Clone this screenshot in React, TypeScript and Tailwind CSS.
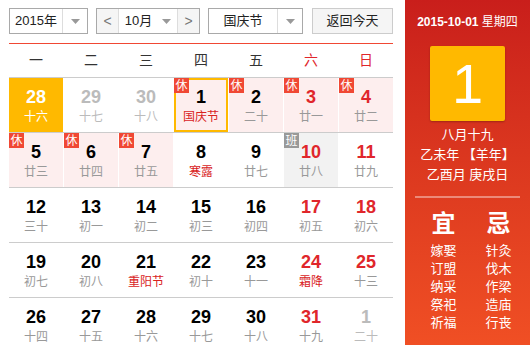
import React from "react";

type Day = {
  n: number;
  lunar: string;
  tone?: "other" | "weekend";
  festival?: boolean;
  badge?: "休" | "班";
  bg?: "pink" | "gray" | "orange";
  today?: boolean;
};

const WEEKDAYS = ["一", "二", "三", "四", "五", "六", "日"];

const ROWS: Day[][] = [
  [
    { n: 28, lunar: "十六", bg: "orange" },
    { n: 29, lunar: "十七", tone: "other" },
    { n: 30, lunar: "十八", tone: "other" },
    { n: 1, lunar: "国庆节", festival: true, badge: "休", bg: "pink", today: true },
    { n: 2, lunar: "二十", badge: "休", bg: "pink" },
    { n: 3, lunar: "廿一", badge: "休", bg: "pink", tone: "weekend" },
    { n: 4, lunar: "廿二", badge: "休", bg: "pink", tone: "weekend" },
  ],
  [
    { n: 5, lunar: "廿三", badge: "休", bg: "pink" },
    { n: 6, lunar: "廿四", badge: "休", bg: "pink" },
    { n: 7, lunar: "廿五", badge: "休", bg: "pink" },
    { n: 8, lunar: "寒露", festival: true },
    { n: 9, lunar: "廿七" },
    { n: 10, lunar: "廿八", badge: "班", bg: "gray", tone: "weekend" },
    { n: 11, lunar: "廿九", tone: "weekend" },
  ],
  [
    { n: 12, lunar: "三十" },
    { n: 13, lunar: "初一" },
    { n: 14, lunar: "初二" },
    { n: 15, lunar: "初三" },
    { n: 16, lunar: "初四" },
    { n: 17, lunar: "初五", tone: "weekend" },
    { n: 18, lunar: "初六", tone: "weekend" },
  ],
  [
    { n: 19, lunar: "初七" },
    { n: 20, lunar: "初八" },
    { n: 21, lunar: "重阳节", festival: true },
    { n: 22, lunar: "初十" },
    { n: 23, lunar: "十一" },
    { n: 24, lunar: "霜降", festival: true, tone: "weekend" },
    { n: 25, lunar: "十三", tone: "weekend" },
  ],
  [
    { n: 26, lunar: "十四" },
    { n: 27, lunar: "十五" },
    { n: 28, lunar: "十六" },
    { n: 29, lunar: "十七" },
    { n: 30, lunar: "十八" },
    { n: 31, lunar: "十九", tone: "weekend" },
    { n: 1, lunar: "二十", tone: "other" },
  ],
];

const YI = ["嫁娶", "订盟", "纳采", "祭祀", "祈福"];
const JI = ["针灸", "伐木", "作梁", "造庙", "行丧"];

function Caret() {
  return (
    <svg width="9" height="5" viewBox="0 0 9 5">
      <path d="M0 0h9L4.5 5z" fill="#999" />
    </svg>
  );
}

function Select({ label, width }: { label: string; width: string }) {
  return (
    <div className={`flex h-full border border-[#a9a9a9] ${width}`}>
      <div className="flex flex-1 items-center justify-center border-r border-[#ddd] text-[13px] text-[#222]">
        {label}
      </div>
      <div className="flex w-[24px] items-center justify-center">
        <Caret />
      </div>
    </div>
  );
}

function Cell({ d }: { d: Day }) {
  const bg =
    d.bg === "orange"
      ? "bg-[#ffb900]"
      : d.bg === "pink"
        ? "bg-[#fdeeee]"
        : d.bg === "gray"
          ? "bg-[#f2f2f2]"
          : "bg-white";

  let num = "text-black";
  let lunar = "text-[#999]";
  if (d.bg === "orange") {
    num = "text-white";
    lunar = "text-white";
  } else if (d.tone === "other") {
    num = "text-[#bbb]";
    lunar = "text-[#bbb]";
  } else if (d.tone === "weekend") {
    num = "text-[#e0262b]";
  }
  if (d.festival) lunar = "text-[#d9231e]";

  return (
    <div
      className={`relative flex flex-col items-center ${bg} ${
        d.today ? "border-2 border-[#ffb900]" : ""
      }`}
    >
      {d.badge && (
        <span
          className={`absolute ${d.today ? "-left-[2px] -top-[2px]" : "left-0 top-0"} flex h-[15px] w-[15px] items-center justify-center text-[12px] leading-none text-white ${
            d.badge === "休" ? "bg-[#f04834]" : "bg-[#999]"
          }`}
        >
          {d.badge}
        </span>
      )}
      <span
        className={`${d.today ? "mt-[7px]" : "mt-[9px]"} text-[18px] font-bold leading-[20px] ${num}`}
      >
        {d.n}
      </span>
      <span className={`mt-[2px] text-[12px] leading-[16px] ${lunar}`}>{d.lunar}</span>
    </div>
  );
}

export default function App() {
  return (
    <div
      className="flex h-[345px] w-[530px] overflow-hidden bg-white"
      style={{ fontFamily: '"Liberation Sans", "Noto Sans CJK SC", sans-serif' }}
    >
      {/* Calendar */}
      <div className="w-[405px] pl-[9px] pr-[12px] pt-[8px]">
        <div className="flex h-[26px] gap-[8px]">
          <Select label="2015年" width="w-[79px]" />
          <div className="flex h-full w-[104px] border border-[#a9a9a9]">
            <div className="flex w-[22px] items-center justify-center border-r border-[#ddd] bg-[#f5f5f5] text-[14px] text-[#777]">
              &lt;
            </div>
            <div className="flex flex-1 items-center justify-center gap-[10px] text-[13px] text-[#222]">
              <span>10月</span>
              <Caret />
            </div>
            <div className="flex w-[22px] items-center justify-center border-l border-[#ddd] bg-[#f5f5f5] text-[14px] text-[#777]">
              &gt;
            </div>
          </div>
          <Select label="国庆节" width="w-[95px]" />
          <button className="ml-px h-full w-[81px] border border-[#ccc] bg-[#f5f5f5] text-[13px] text-[#222]">
            返回今天
          </button>
        </div>

        <div className="mt-[9px] h-px bg-[#f04834]" />

        <div className="grid h-[34px] grid-cols-7 gap-x-px border-b border-[#ccc] text-[14px]">
          {WEEKDAYS.map((w, i) => (
            <div
              key={w}
              className={`flex items-center justify-center ${i >= 5 ? "text-[#e0262b]" : "text-[#333]"}`}
            >
              {w}
            </div>
          ))}
        </div>

        {ROWS.map((row, r) => (
          <div key={r} className="grid h-[55px] grid-cols-7 gap-x-px border-b border-[#ccc]">
            {row.map((d, i) => (
              <Cell key={i} d={d} />
            ))}
          </div>
        ))}
      </div>

      {/* Side panel */}
      <div className="flex flex-1 flex-col bg-linear-to-b from-[#c91e1b] to-[#f04f24] text-white">
        <div className="pt-[14px] text-center text-[12px] leading-[16px]">
          <span className="font-bold">2015-10-01</span> 星期四
        </div>
        <div className="mx-auto mt-[16px] flex h-[75px] w-[75px] items-center justify-center rounded-[2px] bg-[#ffb900] text-[56px] leading-none shadow-[0_1px_2px_rgba(0,0,0,0.25)]">
          1
        </div>
        <div className="mt-[4px] text-center text-[13px] leading-[20px]">
          <div>八月十九</div>
          <div>乙未年 【羊年】</div>
          <div>乙酉月 庚戌日</div>
        </div>
        <div className="mx-[10px] mt-[11px] h-[2px] bg-white/40" />
        <div className="mt-[12px] grid grid-cols-[55px_55px] pl-[11px] text-center">
          <div>
            <div className="text-[24px] font-bold leading-[28px]">宜</div>
            <div className="mt-[4px] text-[13px] leading-[18px]">
              {YI.map((t) => (
                <div key={t}>{t}</div>
              ))}
            </div>
          </div>
          <div>
            <div className="text-[24px] font-bold leading-[28px]">忌</div>
            <div className="mt-[4px] text-[13px] leading-[18px]">
              {JI.map((t) => (
                <div key={t}>{t}</div>
              ))}
            </div>
          </div>
        </div>
      </div>
    </div>
  );
}
